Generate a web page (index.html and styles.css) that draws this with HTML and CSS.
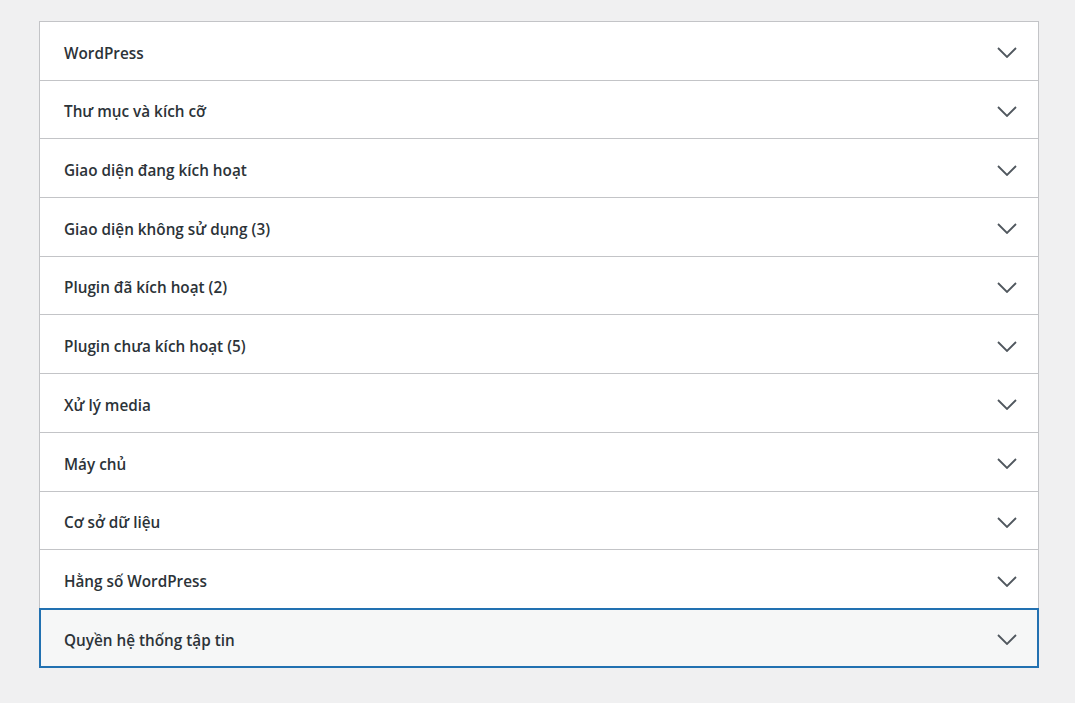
FILE: index.html
```html
<!DOCTYPE html>
<html lang="vi">
<head>
<meta charset="utf-8">
<title>Tình trạng website - Thông tin</title>
<link rel="stylesheet" href="styles.css">
</head>
<body>
<div class="accordion">
  <h3 class="acc-heading"><button class="acc-trigger" type="button"><span class="acc-title">WordPress</span><svg class="acc-icon" viewBox="0 0 20 11" width="20" height="11"><polyline points="1,1 10,10 19,1"/></svg></button></h3>
  <h3 class="acc-heading"><button class="acc-trigger" type="button"><span class="acc-title">Thư mục và kích cỡ</span><svg class="acc-icon" viewBox="0 0 20 11" width="20" height="11"><polyline points="1,1 10,10 19,1"/></svg></button></h3>
  <h3 class="acc-heading"><button class="acc-trigger" type="button"><span class="acc-title">Giao diện đang kích hoạt</span><svg class="acc-icon" viewBox="0 0 20 11" width="20" height="11"><polyline points="1,1 10,10 19,1"/></svg></button></h3>
  <h3 class="acc-heading"><button class="acc-trigger" type="button"><span class="acc-title">Giao diện không sử dụng (3)</span><svg class="acc-icon" viewBox="0 0 20 11" width="20" height="11"><polyline points="1,1 10,10 19,1"/></svg></button></h3>
  <h3 class="acc-heading"><button class="acc-trigger" type="button"><span class="acc-title">Plugin đã kích hoạt (2)</span><svg class="acc-icon" viewBox="0 0 20 11" width="20" height="11"><polyline points="1,1 10,10 19,1"/></svg></button></h3>
  <h3 class="acc-heading"><button class="acc-trigger" type="button"><span class="acc-title">Plugin chưa kích hoạt (5)</span><svg class="acc-icon" viewBox="0 0 20 11" width="20" height="11"><polyline points="1,1 10,10 19,1"/></svg></button></h3>
  <h3 class="acc-heading"><button class="acc-trigger" type="button"><span class="acc-title">Xử lý media</span><svg class="acc-icon" viewBox="0 0 20 11" width="20" height="11"><polyline points="1,1 10,10 19,1"/></svg></button></h3>
  <h3 class="acc-heading"><button class="acc-trigger" type="button"><span class="acc-title">Máy chủ</span><svg class="acc-icon" viewBox="0 0 20 11" width="20" height="11"><polyline points="1,1 10,10 19,1"/></svg></button></h3>
  <h3 class="acc-heading"><button class="acc-trigger" type="button"><span class="acc-title">Cơ sở dữ liệu</span><svg class="acc-icon" viewBox="0 0 20 11" width="20" height="11"><polyline points="1,1 10,10 19,1"/></svg></button></h3>
  <h3 class="acc-heading"><button class="acc-trigger" type="button"><span class="acc-title">Hằng số WordPress</span><svg class="acc-icon" viewBox="0 0 20 11" width="20" height="11"><polyline points="1,1 10,10 19,1"/></svg></button></h3>
  <h3 class="acc-heading"><button class="acc-trigger is-focused" type="button"><span class="acc-title">Quyền hệ thống tập tin</span><svg class="acc-icon" viewBox="0 0 20 11" width="20" height="11"><polyline points="1,1 10,10 19,1"/></svg></button></h3>
</div>
</body>
</html>
```
FILE: styles.css
```css
html, body {
  margin: 0;
  padding: 0;
  background: #f0f0f1;
}

body {
  padding: 21px 0 0 39px;
  font-family: "Open Sans", "Noto Sans", sans-serif;
  color: #1d2327;
}

.accordion {
  width: 1000px;
  box-sizing: border-box;
  border: 1px solid #c3c4c7;
  background: #fff;
}

.acc-heading {
  margin: 0;
  border-top: 1px solid #c3c4c7;
  font-size: inherit;
  font-weight: 600;
}

.acc-heading:first-child {
  border-top: 0;
}

.acc-trigger {
  display: flex;
  align-items: center;
  justify-content: space-between;
  width: 100%;
  height: 57.7px;
  margin: 0;
  padding: 0 21px 0 24px;
  box-sizing: border-box;
  border: 0;
  background: #fff;
  color: #2c3338;
  font: 600 15.3px/1 "Open Sans", "Noto Sans", sans-serif;
  text-align: left;
  cursor: pointer;
}

.acc-title {
  padding-top: 5px;
}

.acc-icon {
  flex: none;
  margin-top: 4px;
}

.acc-icon polyline {
  fill: none;
  stroke: #50575e;
  stroke-width: 1.8;
}

.acc-trigger.is-focused {
  background: #f6f7f7;
  outline: 2px solid #2271b1;
  outline-offset: -1px;
}
```
